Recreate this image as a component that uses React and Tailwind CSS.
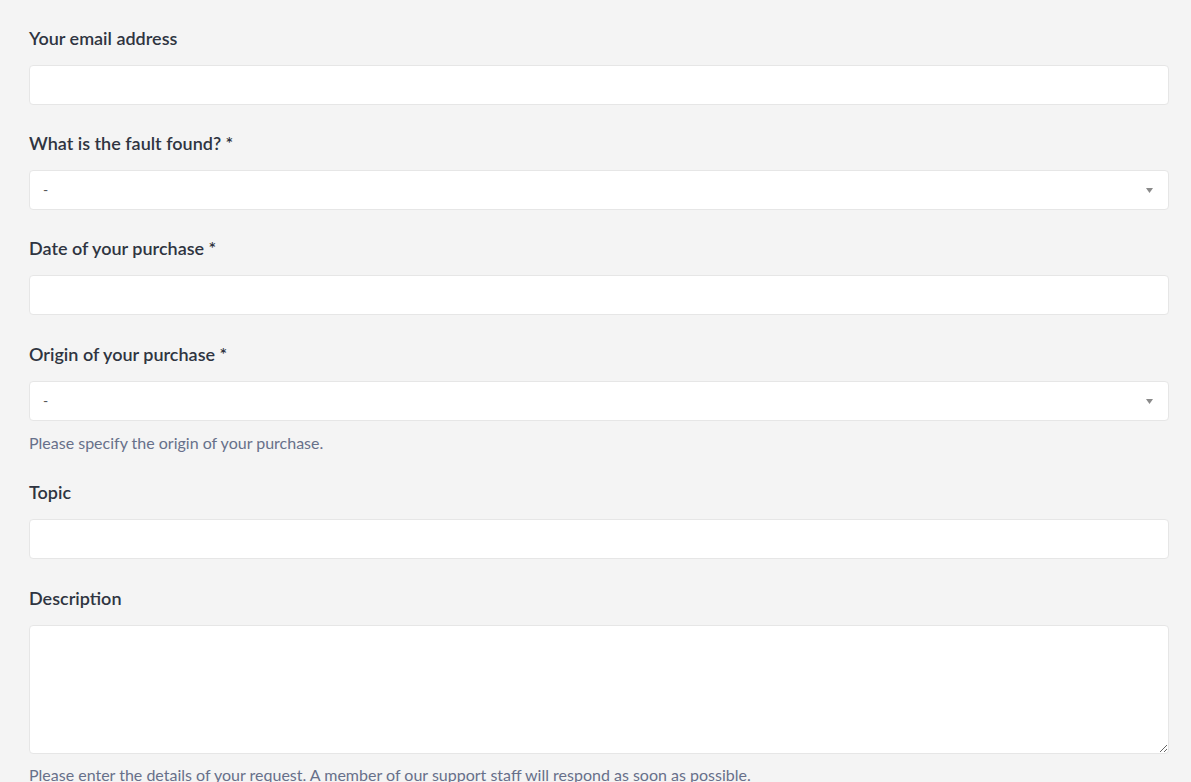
import React from "react";

const inputCls =
  "block w-full h-[40px] bg-white border border-[#e6e6e6] rounded-[4px] outline-none";

function Label({ children }) {
  return (
    <div className="text-[18px] leading-[24px] font-semibold text-[#2f3441] mb-[15px]">
      {children}
    </div>
  );
}

function SelectBox() {
  return (
    <div className="relative w-full h-[40px] bg-white border border-[#e6e6e6] rounded-[4px] flex items-center pl-[13px] pr-[15px]">
      <span className="text-[14px] text-[#555] leading-none">-</span>
      <svg className="ml-auto" width="7" height="5" viewBox="0 0 7 5">
        <path d="M0 0H7L3.5 5Z" fill="#8a8a8a" />
      </svg>
    </div>
  );
}

function Hint({ children, className = "mt-[12px]" }) {
  return (
    <div className={"text-[16px] leading-[20px] text-[#67708a] " + className}>
      {children}
    </div>
  );
}

export default function App() {
  return (
    <div
      className="min-h-[782px] bg-[#f4f4f4] pl-[29px] pr-[22px] pt-[26px] overflow-hidden"
      style={{ fontFamily: "Lato, 'Noto Sans', sans-serif" }}
    >
      <div className="mb-[26px]">
        <Label>Your email address</Label>
        <input className={inputCls} />
      </div>
      <div className="mb-[26px]">
        <Label>What is the fault found? *</Label>
        <SelectBox />
      </div>
      <div className="mb-[27px]">
        <Label>Date of your purchase *</Label>
        <input className={inputCls} />
      </div>
      <div className="mb-[27px]">
        <Label>Origin of your purchase *</Label>
        <SelectBox />
        <Hint>Please specify the origin of your purchase.</Hint>
      </div>
      <div className="mb-[27px]">
        <Label>Topic</Label>
        <input className={inputCls} />
      </div>
      <div>
        <Label>Description</Label>
        <textarea className="block w-full h-[129px] bg-white border border-[#e6e6e6] rounded-[4px] outline-none" />
        <Hint className="mt-[11px]">
          Please enter the details of your request. A member of our support
          staff will respond as soon as possible.
        </Hint>
      </div>
    </div>
  );
}
